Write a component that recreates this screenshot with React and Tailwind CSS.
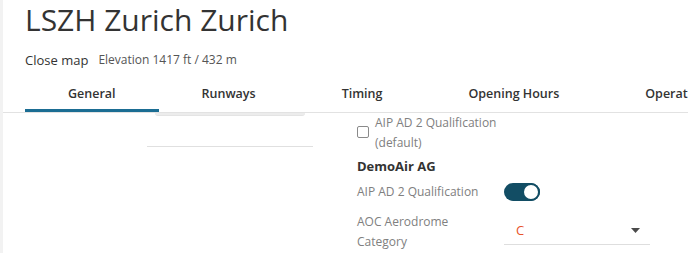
import React from "react";

const tabs = ["General", "Runways", "Timing", "Opening Hours", "Operations"];

const App = () => {
  return (
    <div
      className="w-[688px] h-[253px] overflow-hidden bg-white border-l-[3px] border-[#f2f2f2] text-[#333]"
      style={{ fontFamily: '"Open Sans", sans-serif' }}
    >
      {/* Header */}
      <div className="pl-[22px] pt-[2px]">
        <h1 className="text-[30px] leading-[36px] font-normal text-[#333]">LSZH Zurich Zurich</h1>
        <div className="mt-[12px] flex items-center h-[20px] leading-[20px]">
          <span className="text-[13px] text-[#333]">Close map</span>
          <span className="ml-[10px] text-[12px] text-[#555]">Elevation 1417 ft / 432 m</span>
        </div>
      </div>

      {/* Tabs */}
      <div className="flex pl-[22px] border-b border-[#e2e2e2] whitespace-nowrap">
        {tabs.map((t, i) => (
          <div
            key={t}
            className={
              i === 0
                ? "px-[43px] pt-[14px] pb-[5px] border-b-[3px] border-[#1b6d93] text-[12.5px] leading-[20px] font-semibold text-[#333]"
                : "px-[43px] pt-[14px] pb-[5px] border-b-[3px] border-transparent text-[12.5px] leading-[20px] font-semibold text-[#333]"
            }
          >
            {t}
          </div>
        ))}
      </div>

      {/* Content */}
      <div className="flex pl-[144px]">
        {/* Left column */}
        <div className="w-[166px] shrink-0">
          <div className="mx-[8px] h-[3px] rounded-b-[6px] bg-[#ececec] border-b border-[#e4e4e4]" />
          <div className="mt-[30px] h-px bg-[#e0e0e0]" />
        </div>

        {/* Right column */}
        <div className="ml-[44px] w-[300px] shrink-0">
          <div className="flex items-start">
            <div className="mt-[13px] w-[12px] h-[12px] border border-[#8a8a8a] rounded-[2px] bg-white shrink-0" />
            <div className="ml-[6px] w-[140px] text-[12px] leading-[20px] text-[#808080]">
              AIP AD 2 Qualification (default)
            </div>
          </div>

          <div className="mt-[3px] text-[13px] leading-[20px] font-bold text-[#333]">DemoAir AG</div>

          <div className="mt-[6px] flex items-center h-[20px]">
            <div className="w-[147px] text-[12px] leading-[20px] text-[#808080] shrink-0">AIP AD 2 Qualification</div>
            <div className="w-[36px] h-[18px] rounded-full bg-[#124d64] flex items-center justify-end">
              <div className="w-[18px] h-[18px] rounded-full bg-white border-2 border-[#124d64]" />
            </div>
          </div>

          <div className="mt-[10px] flex items-start">
            <div className="w-[147px] pr-[15px] text-[12px] leading-[20px] text-[#808080] shrink-0">
              AOC Aerodrome Category
            </div>
            <div className="w-[146px] h-[33px] border-b border-[#dedede] flex items-center justify-between pl-[12px] pr-[10px] pt-[5px]">
              <span className="text-[13px] text-[#e8532b]">C</span>
              <svg width="9" height="5" viewBox="0 0 9 5">
                <path d="M0 0 L9 0 L4.5 5 Z" fill="#4a4a4a" />
              </svg>
            </div>
          </div>
        </div>
      </div>
    </div>
  );
};

export default App;
